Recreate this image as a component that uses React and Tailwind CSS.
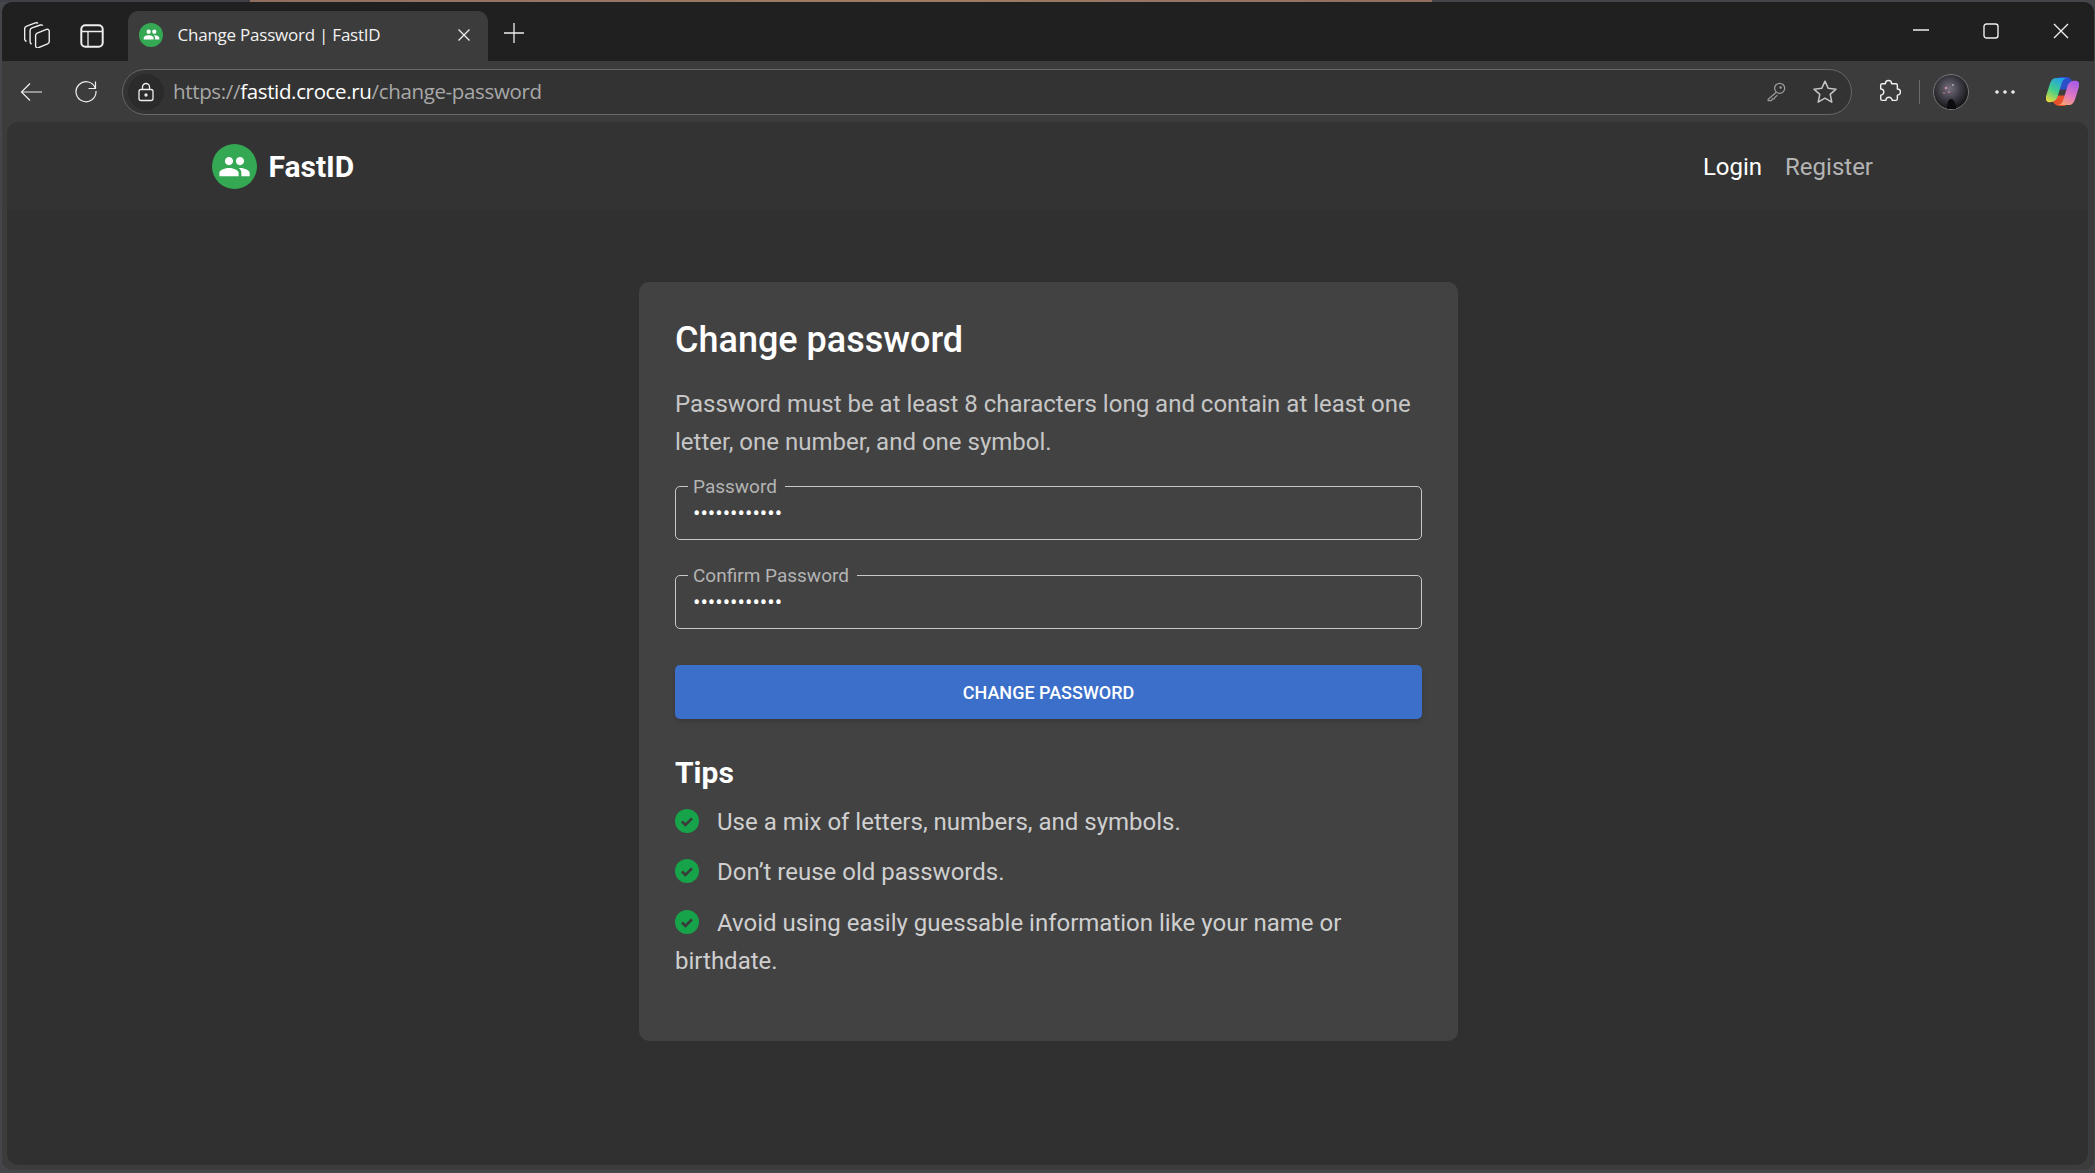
import React from "react";

const Group = ({ className }) => (
  <svg viewBox="0 0 24 24" fill="currentColor" className={className}>
    <path d="M16 11c1.66 0 2.99-1.34 2.99-3S17.66 5 16 5c-1.66 0-3 1.34-3 3s1.34 3 3 3zm-8 0c1.66 0 2.99-1.34 2.99-3S9.66 5 8 5C6.34 5 5 6.34 5 8s1.34 3 3 3zm0 2c-2.33 0-7 1.17-7 3.5V19h14v-2.5c0-2.33-4.67-3.5-7-3.5zm8 0c-.29 0-.62.02-.97.05 1.16.84 1.97 1.97 1.97 3.45V19h6v-2.5c0-2.33-4.67-3.5-7-3.5z" />
  </svg>
);

const Check = () => (
  <svg viewBox="0 0 24 24" className="w-6 h-6 inline-block align-[-3px] mr-[18px]">
    <circle cx="12" cy="12" r="12" fill="#16a34a" />
    <path d="M7 12.5l3.4 3.4L17 9.4" fill="none" stroke="#3a3a3a" strokeWidth="2.6" />
  </svg>
);

const Field = ({ label, className }) => (
  <fieldset className={"border border-[#c8c8c8] rounded-[5px] h-[59px] px-[12px] " + className}>
    <legend className="pl-[5px] pr-[8px] text-[19px] leading-[12px] text-[#b4b4b4]">{label}</legend>
    <input
      type="password"
      defaultValue="............"
      className="w-full bg-transparent outline-none text-white text-[22px] pl-[5px] h-[42px] block"
    />
  </fieldset>
);

const Tip = ({ children }) => (
  <p className="text-[24px] leading-[38.4px] text-[#cfcfcf] mb-[12px]">
    <Check />
    {children}
  </p>
);

export default function App() {
  return (
    <div className="w-[2095px] h-[1173px] bg-[#45464a] bg-[linear-gradient(to_right,#3f4146_0,#3f4146_250px,#8f6f5f_250px,#a07c66_900px,#8f6f5f_1432px,#45464a_1432px)] bg-[length:100%_2px] bg-no-repeat pt-[2px] pl-[2px] pr-[1px] overflow-hidden font-['Roboto',sans-serif]">
      <div className="h-[1168px] bg-[#3c3c3c] rounded-[10px] flex flex-col overflow-hidden">
        {/* tab strip */}
        <div className="h-[59px] bg-[#202020] flex items-end pl-[22px] shrink-0">
          <svg viewBox="0 0 24 24" fill="none" stroke="#eee" strokeWidth="1.3" strokeLinejoin="round" className="w-[26px] h-[26px] mb-[13px] mr-[30px]">
            <path d="M2.300 18C1 17.500.6 16.500.6 15.500V6.500C.6 5 1.200 4.200 2.500 3.800L10.500.8c1-.3 2 0 2.300.6" />
            <path d="M7 20.500C6 20 5.600 19 5.600 18V8c0-1.300.6-2 1.800-2.500L15 2.800c1-.3 2 0 2.300.7" />
            <path d="M10.700 12.500c0-1.100.5-1.800 1.500-2.200l8.500-3.500c1.300-.5 2.600.3 2.600 1.700v9.500c0 1.100-.5 1.800-1.500 2.200l-8.500 3.500c-1.300.5-2.600-.3-2.600-1.700z" />
          </svg>
          <svg viewBox="0 0 24 24" fill="none" stroke="#eee" className="w-[24px] h-[24px] mb-[13px] mr-[24px]">
            <rect x="1.300" y="1.300" width="21.400" height="21.400" rx="4" strokeWidth="2" />
            <path d="M2 7.500h20M8 7.500v15" strokeWidth="1.300" />
          </svg>
          <div className="w-[360px] h-[50px] bg-[#3c3c3c] rounded-t-[10px] flex items-center pl-[11px] pr-[17px] pb-[3px]">
            <div className="w-[24px] h-[24px] rounded-full bg-[#34a853] flex items-center justify-center text-white">
              <Group className="w-[17px] h-[17px]" />
            </div>
            <span className="ml-[14.5px] text-[17px] text-[#f2f2f2] font-['Open_Sans',sans-serif] tracking-[-0.23px] flex-1">Change Password | FastID</span>
            <svg viewBox="0 0 14 14" fill="none" stroke="#eee" strokeWidth="1.3" className="w-[14px] h-[14px]">
              <path d="M1.500 1.500l11 11M12.500 1.500l-11 11" />
            </svg>
          </div>
          <svg viewBox="0 0 20 20" fill="none" stroke="#eee" strokeWidth="1.3" className="w-[20px] h-[20px] mb-[18px] ml-[16px]">
            <path d="M10 0v20M0 10h20" />
          </svg>
          <div className="ml-auto flex items-center h-full pb-[1px] pr-[25px] gap-[54px]">
            <svg viewBox="0 0 16 16" stroke="#eee" strokeWidth="1.4" className="w-[16px] h-[16px]"><path d="M0 7h16" /></svg>
            <svg viewBox="0 0 16 16" fill="none" stroke="#eee" strokeWidth="1.4" className="w-[16px] h-[16px]"><rect x="1" y="1" width="14" height="14" rx="2.500" /></svg>
            <svg viewBox="0 0 16 16" stroke="#eee" strokeWidth="1.4" className="w-[16px] h-[16px]"><path d="M1 1l14 14M15 1L1 15" /></svg>
          </div>
        </div>

        {/* toolbar */}
        <div className="h-[61px] flex items-center shrink-0 pl-[18px]">
          <svg viewBox="0 0 24 24" fill="none" stroke="#eee" strokeWidth="1.2" className="w-[24px] h-[24px]">
            <path d="M22 12H1.500M10 3.500L1.500 12l8.500 8.500" />
          </svg>
          <svg viewBox="0 0 24 24" fill="none" stroke="#eee" strokeWidth="1.2" className="w-[24px] h-[24px] ml-[30px] -mt-[2px]">
            <path d="M21.500 2.500v7h-7" />
            <path d="M21.500 9.500A10 10 0 1 0 22 12" />
          </svg>
          <div className="ml-[24px] w-[1730px] h-[46px] rounded-full border border-[#686868] bg-[#333333] flex items-center pl-[5px] pr-[13px]">
            <div className="w-[36px] h-[36px] rounded-full bg-[#2b2b2b] flex items-center justify-center">
              <svg viewBox="0 0 20 20" fill="none" stroke="#eee" strokeWidth="1.3" className="w-[20px] h-[20px]">
                <rect x="3" y="7.500" width="14" height="11" rx="2" />
                <path d="M6.500 7.500V5a3.500 3.500 0 0 1 7 0v2.500" />
                <circle cx="10" cy="13" r="1" fill="#eee" />
              </svg>
            </div>
            <span className="ml-[9px] text-[20.5px] text-[#a8a8a8] font-['Open_Sans',sans-serif] tracking-[-0.35px] flex-1">
              https://<span className="text-white">fastid.croce.ru</span>/change-password
            </span>
            <svg viewBox="0 0 24 24" fill="none" stroke="#9a9a9a" strokeWidth="1.4" className="w-[22px] h-[22px] mr-[25px]">
              <circle cx="16" cy="8" r="5.500" />
              <path d="M12 12.500L3.500 20v1.500H7l1-2h2l1-2 2.500-2" />
              <circle cx="17" cy="7" r=".7" />
            </svg>
            <svg viewBox="0 0 24 24" fill="none" stroke="#c4c4c4" strokeWidth="1.4" strokeLinejoin="round" className="w-[26px] h-[26px]">
              <path d="M12 2l3 6.600 7.200.8-5.400 4.800 1.500 7.100L12 17.700l-6.300 3.600 1.500-7.100L1.800 9.400 9 8.600z" />
            </svg>
          </div>
          <svg viewBox="0 0 24 24" fill="none" stroke="#eee" strokeWidth="1.4" strokeLinejoin="round" className="w-[25px] h-[25px] ml-[24px]">
            <path d="M9 4.500a3 3 0 0 1 6 0H19a1.500 1.500 0 0 1 1.500 1.500v3.500a3 3 0 0 1 0 6V19a1.500 1.500 0 0 1-1.500 1.500h-3.500a3 3 0 0 0-6 0H6A1.500 1.500 0 0 1 4.500 19v-3.500a3 3 0 0 0 0-6V6A1.500 1.500 0 0 1 6 4.500z" />
          </svg>
          <div className="w-px h-[24px] bg-[#6a6a6a] ml-[18px]" />
          <svg viewBox="0 0 36 36" className="w-[36px] h-[36px] ml-[13px]">
            <defs>
              <radialGradient id="av" cx="45%" cy="40%" r="60%">
                <stop offset="0" stopColor="#77707c" />
                <stop offset=".55" stopColor="#3b3a42" />
                <stop offset="1" stopColor="#121214" />
              </radialGradient>
            </defs>
            <circle cx="18" cy="18" r="17.500" fill="url(#av)" stroke="#777" strokeWidth="1" />
            <circle cx="13" cy="14" r="1.300" fill="#c98fa6" />
            <circle cx="16" cy="18" r="1.100" fill="#b77f98" />
            <circle cx="20" cy="11" r="1" fill="#aab" />
            <circle cx="11" cy="19" r=".9" fill="#a78" />
            <path d="M14 35c0-5 1-10 4-10s5 5 5 10z" fill="#0c0c0e" />
          </svg>
          <svg viewBox="0 0 20 4" fill="#eee" className="w-[20px] h-[4px] ml-[26px]">
            <circle cx="2" cy="2" r="1.800" /><circle cx="10" cy="2" r="1.800" /><circle cx="18" cy="2" r="1.800" />
          </svg>
          <svg viewBox="0 0 34 32" className="w-[33px] h-[31px] ml-[31px]">
            <defs>
              <linearGradient id="cpa" x1="0.7" y1="0" x2="0.2" y2="1">
                <stop offset="0" stopColor="#1f9fe8" /><stop offset=".55" stopColor="#45d08a" /><stop offset="1" stopColor="#e8d83a" />
              </linearGradient>
              <linearGradient id="cpb" x1="0.7" y1="0" x2="0.3" y2="1">
                <stop offset="0" stopColor="#a95be8" /><stop offset=".6" stopColor="#e27ac0" /><stop offset="1" stopColor="#f7a078" />
              </linearGradient>
            </defs>
            <path d="M13 1h8c3 0 5 2 6 5l2 8H14z" fill="#2a4fc8" />
            <path d="M6 20h15l-1 11h-6c-3 0-6-2-8-6z" fill="#e8502c" />
            <path d="M10 2h11c-3 1-4 3-5 6l-4 13c-1 4-4 6-8 6H3c-2.500 0-4-3-3-6l4-13c1-3 3-6 6-6z" fill="url(#cpa)" />
            <path d="M24 30H13c3-1 4-3 5-6l4-13c1-4 4-6 8-6h1c2.500 0 4 3 3 6l-4 13c-1 3-3 6-6 6z" fill="url(#cpb)" />
          </svg>
        </div>

        {/* page */}
        <div className="flex-1 ml-[5px] mr-[6px] mb-[5px] bg-[#303030] rounded-[12px] flex flex-col overflow-hidden">
          <header className="h-[88px] bg-[#333333] shrink-0 flex items-center pl-[205px] pr-[215px]">
            <div className="w-[45px] h-[45px] rounded-full bg-[#34a853] flex items-center justify-center text-white">
              <Group className="w-[33px] h-[33px]" />
            </div>
            <span className="ml-[11.5px] text-[30px] font-bold text-white flex-1">FastID</span>
            <nav className="flex gap-[23px] text-[24px] mt-[2px]">
              <a className="text-white">Login</a>
              <a className="text-[#b4b4b4]">Register</a>
            </nav>
          </header>
          <main className="flex-1 flex justify-center pt-[72px]">
            <div className="w-[819px] h-[759px] bg-[#424242] rounded-[10px] px-[36px] pt-[37px] ml-[2px]">
              <h1 className="text-[36px] leading-[42px] font-medium text-white">Change password</h1>
              <p className="mt-[24px] text-[24px] leading-[38.4px] text-[#c6c6c6]">
                Password must be at least 8 characters long and contain at least one letter, one number, and one symbol.
              </p>
              <Field label="Password" className="mt-[19px]" />
              <Field label="Confirm Password" className="mt-[30px]" />
              <button className="mt-[36px] w-full h-[54px] pt-[1px] bg-[#3b6fca] rounded-[5px] shadow-md text-white text-[18px] font-medium">CHANGE PASSWORD</button>
              <h2 className="mt-[35px] text-[30px] leading-[38px] font-bold text-white">Tips</h2>
              <div className="mt-[11px]">
                <Tip>Use a mix of letters, numbers, and symbols.</Tip>
                <Tip>Don’t reuse old passwords.</Tip>
                <Tip>Avoid using easily guessable information like your name or birthdate.</Tip>
              </div>
            </div>
          </main>
        </div>
      </div>
    </div>
  );
}
